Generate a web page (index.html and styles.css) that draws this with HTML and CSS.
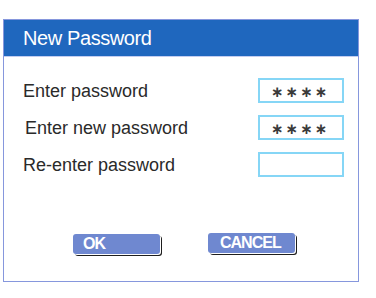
FILE: index.html
```html
<!DOCTYPE html>
<html>
<head>
<meta charset="utf-8">
<link rel="stylesheet" href="styles.css">
</head>
<body>
<div class="dialog">
  <div class="title">New Password</div>
  <div class="content">
    <div class="row">
      <span class="label">Enter password</span>
      <div class="field"><span class="mask">∗∗∗∗</span></div>
    </div>
    <div class="row">
      <span class="label label-shift">Enter new password</span>
      <div class="field"><span class="mask">∗∗∗∗</span></div>
    </div>
    <div class="row">
      <span class="label">Re-enter password</span>
      <div class="field"></div>
    </div>
    <div class="buttons">
      <div class="btn btn-ok">OK</div>
      <div class="btn btn-cancel">CANCEL</div>
    </div>
  </div>
</div>
</body>
</html>
```

FILE: styles.css
```css
html, body {
  margin: 0;
  padding: 0;
  background: #ffffff;
}
body {
  width: 376px;
  height: 298px;
  overflow: hidden;
  font-family: "Liberation Sans", Arial, sans-serif;
}
.dialog {
  box-sizing: border-box;
  margin: 19px 0 0 3px;
  width: 356px;
  height: 263px;
  border: 1px solid #8697dd;
  display: flex;
  flex-direction: column;
}
.title {
  height: 36px;
  line-height: 36px;
  background: #1f67be;
  color: #ffffff;
  font-size: 20px;
  letter-spacing: -0.4px;
  padding-left: 19px;
  border-bottom: 1px solid #c3cdf0;
}
.content {
  padding: 21px 14px 0 19px;
  display: flex;
  flex-direction: column;
  gap: 12px;
}
.row {
  display: flex;
  align-items: center;
  justify-content: space-between;
  height: 25px;
}
.label {
  font-size: 18px;
  line-height: 18px;
  color: #2a2a2a;
}
.label-shift {
  margin-left: 2px;
}
.field {
  box-sizing: border-box;
  width: 86px;
  height: 25px;
  border: 2px solid #86d6f6;
  background: #ffffff;
  display: flex;
  align-items: center;
  padding-left: 11px;
}
.mask {
  font-family: "DejaVu Sans", sans-serif;
  font-weight: bold;
  font-size: 15px;
  line-height: 15px;
  letter-spacing: 2px;
  color: #3a3a3a;
  position: relative;
  top: 2px;
}
.buttons {
  display: flex;
  gap: 48px;
  padding-left: 50px;
  margin-top: 45px;
}
.btn {
  box-sizing: border-box;
  width: 87px;
  height: 20px;
  line-height: 20px;
  background: #6f88d0;
  border-radius: 3px;
  color: #ffffff;
  font-weight: bold;
  font-size: 16px;
  letter-spacing: -1px;
  box-shadow: 1px 1px 0 #ffffff, 2px 2px 0 #1e1e1e;
}
.btn-ok {
  padding-left: 10px;
}
.btn-cancel {
  padding-left: 12px;
  margin-top: -1px;
}
```
